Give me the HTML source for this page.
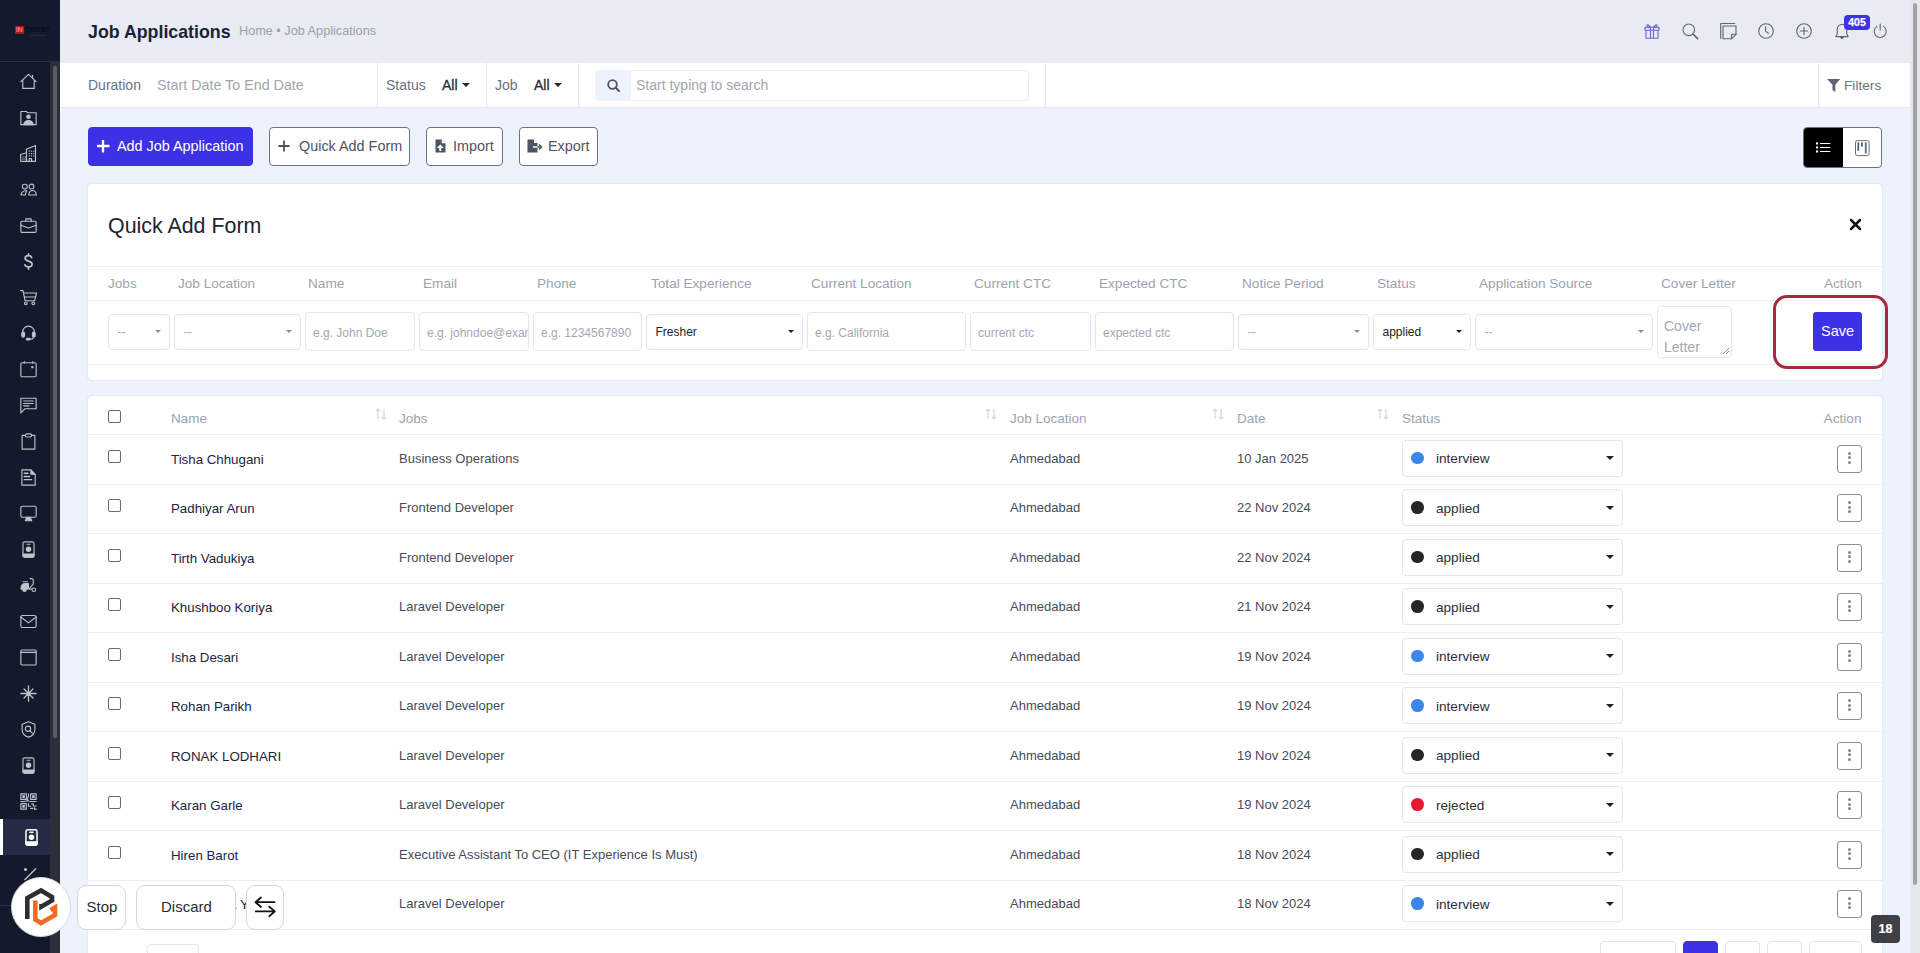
<!DOCTYPE html>
<html><head><meta charset="utf-8"><title>Job Applications</title>
<style>
*{box-sizing:border-box;margin:0;padding:0}
html,body{width:1920px;height:953px;overflow:hidden}
body{font-family:"Liberation Sans",sans-serif;background:#eef2fc;position:relative;color:#28313f}
.a{position:absolute;white-space:nowrap}
svg{position:absolute;overflow:visible}
.btn{position:absolute;top:127px;height:39px;border:1px solid #6b7280;border-radius:4px;background:#fff;font-size:14.4px;color:#4b5563}
.th{position:absolute;font-size:13.6px;color:#9ca3af;white-space:nowrap}
.inp{position:absolute;border:1px solid #e3e6eb;border-radius:4px;background:#fff;font-size:12px;color:#a3a8b2;white-space:nowrap;overflow:hidden}
.inp span{position:absolute;left:7px;top:11px}
.caret{position:absolute;width:0;height:0;border-left:4px solid transparent;border-right:4px solid transparent;border-top:4px solid #222}
.caretl{position:absolute;width:0;height:0;border-left:3.5px solid transparent;border-right:3.5px solid transparent;border-top:3.5px solid #888}
.hl{position:absolute;height:1px;background:#eceef2}
.cb{position:absolute;left:108px;width:13px;height:13px;border:1px solid #6a6a6a;border-radius:2px;background:#fff}
.nm{position:absolute;left:171px;font-size:13.3px;color:#20243f;white-space:nowrap;}
.td{position:absolute;font-size:13px;color:#464c5a;white-space:nowrap}
.st{position:absolute;left:1402px;width:221px;height:37px;border:1px solid #e3e5ea;border-radius:4px;background:#fff}
.dot{position:absolute;left:8px;top:11px;width:12.8px;height:12.8px;border-radius:50%}
.sttx{position:absolute;left:33px;top:10.5px;font-size:13.6px;color:#28313f}
.kb{position:absolute;left:1837px;width:25px;height:28px;border:1px solid #8d8d8d;border-radius:3px;background:#fff}
.kb i{position:absolute;left:10.2px;width:3px;height:3px;border-radius:50%;background:#858585}
.sort{position:absolute;width:12px;height:12px}
.ob{position:absolute;top:885px;height:45px;border:1px solid #d6d6d6;border-radius:9px;background:#fff;font-size:15px;color:#2b2b2b}
</style></head><body>
<div class="a" style="left:0;top:0;width:60px;height:953px;background:#131a2b"></div>
<div class="a" style="left:0;top:61px;width:60px;height:1px;background:#2a3040"></div>
<div class="a" style="left:50px;top:62px;width:10px;height:891px;background:#2a2f3a"></div>
<div class="a" style="left:53px;top:66px;width:4px;height:672px;background:#595d65;border-radius:2px"></div>
<div class="a" style="left:15px;top:26px;width:9px;height:7.6px;background:#b8141a;border-radius:1px"></div>
<div class="a" style="left:16px;top:26.3px;font-size:7px;font-weight:bold;color:#f08080;line-height:7px;letter-spacing:-0.3px">IN</div>
<div class="a" style="left:25.5px;top:26px;font-size:6.5px;font-weight:bold;color:#090c16;line-height:7px;letter-spacing:0.6px">CREST</div>
<div class="a" style="left:30px;top:34.5px;width:16px;height:1px;background:#262c3a"></div>
<div class="a" style="left:0;top:819px;width:50px;height:36px;background:#262b45"></div>
<div class="a" style="left:0;top:819px;width:3px;height:36px;background:#fff"></div>
<svg style="left:19.5px;top:72.5px" width="17" height="17" viewBox="0 0 16 16"><g fill="none" stroke="#bfc3ca" stroke-width="1.05" stroke-linejoin="round" stroke-linecap="round"><path d="M0.8 8.2L8 1.2l7.2 7M2.6 6.8V14.5h10.8V6.8M11.8 2.2v2.8"/></g></svg>
<svg style="left:19.5px;top:108.5px" width="17" height="17" viewBox="0 0 16 16"><g fill="none" stroke="#bfc3ca" stroke-width="1.05" stroke-linejoin="round" stroke-linecap="round"><path d="M0.8 2.3h5l1.2 1.2h8.2v11.2H0.8z"/><circle cx="8" cy="7.2" r="2.1" fill="#bfc3ca" stroke="none"/><path d="M3.5 14.7c.4-2.6 2.2-3.9 4.5-3.9s4.1 1.3 4.5 3.9z" fill="#bfc3ca"/></g></svg>
<svg style="left:19.5px;top:144.5px" width="17" height="17" viewBox="0 0 16 16"><g fill="none" stroke="#bfc3ca" stroke-width="1.05" stroke-linejoin="round" stroke-linecap="round"><path d="M0.6 15.4V8.9l5.5-1.6M6.1 15.4V4.1l8.5-3.6v14.9H0.6"/><path d="M8.6 15.4v-2.6h2.3v2.6"/><rect x="8.2" y="5.3" width="1.1" height="1.1" fill="#bfc3ca" stroke="none"/><rect x="8.2" y="7.5" width="1.1" height="1.1" fill="#bfc3ca" stroke="none"/><rect x="8.2" y="9.7" width="1.1" height="1.1" fill="#bfc3ca" stroke="none"/><rect x="10.3" y="5.3" width="1.1" height="1.1" fill="#bfc3ca" stroke="none"/><rect x="10.3" y="7.5" width="1.1" height="1.1" fill="#bfc3ca" stroke="none"/><rect x="10.3" y="9.7" width="1.1" height="1.1" fill="#bfc3ca" stroke="none"/><rect x="12.4" y="5.3" width="1.1" height="1.1" fill="#bfc3ca" stroke="none"/><rect x="12.4" y="7.5" width="1.1" height="1.1" fill="#bfc3ca" stroke="none"/><rect x="12.4" y="9.7" width="1.1" height="1.1" fill="#bfc3ca" stroke="none"/><rect x="2.2" y="10.8" width="1.1" height="1.1" fill="#bfc3ca" stroke="none"/><rect x="2.2" y="12.8" width="1.1" height="1.1" fill="#bfc3ca" stroke="none"/><rect x="4.2" y="10.8" width="1.1" height="1.1" fill="#bfc3ca" stroke="none"/><rect x="4.2" y="12.8" width="1.1" height="1.1" fill="#bfc3ca" stroke="none"/></g></svg>
<svg style="left:19.5px;top:180.5px" width="17" height="17" viewBox="0 0 16 16"><g fill="none" stroke="#bfc3ca" stroke-width="1.05" stroke-linejoin="round" stroke-linecap="round"><rect x="2.2" y="3" width="4.6" height="4.4" rx="1.8"/><circle cx="10.8" cy="5.2" r="2.3"/><path d="M0.9 13.2c.2-2.2 2.2-4.1 5.4-4.3l-1.5 4.3z"/><path d="M8.2 13.2c.3-2.6 1.8-4.2 3.6-4.2s3.3 1.6 3.6 4.2z"/></g></svg>
<svg style="left:19.5px;top:216.5px" width="17" height="17" viewBox="0 0 16 16"><g fill="none" stroke="#bfc3ca" stroke-width="1.05" stroke-linejoin="round" stroke-linecap="round"><rect x="0.8" y="4" width="14.4" height="10.5" rx="1"/><path d="M5.5 4V1.8h5V4M0.8 7.8l7.2 2.5 7.2-2.5"/></g></svg>
<svg style="left:19.5px;top:252.5px" width="17" height="17" viewBox="0 0 16 16"><g fill="none" stroke="#bfc3ca" stroke-width="1.05" stroke-linejoin="round" stroke-linecap="round"><path d="M11 4.3C10.4 3 9.3 2.5 8 2.5c-1.8 0-3.2 1-3.2 2.5s1.3 2.1 3.2 2.6 3.4 1 3.4 2.7-1.5 2.8-3.4 2.8c-1.6 0-2.9-.7-3.4-2M8 .8v1.7M8 13.1v2" stroke-width="1.6"/></g></svg>
<svg style="left:19.5px;top:288.5px" width="17" height="17" viewBox="0 0 16 16"><g fill="none" stroke="#bfc3ca" stroke-width="1.05" stroke-linejoin="round" stroke-linecap="round"><path d="M0.5 1.5h2.3l2 9.5h9l1.7-7.2H3.6M4.2 7.5h10.5"/><circle cx="5.5" cy="13.5" r="1.3"/><circle cx="12.5" cy="13.5" r="1.3"/></g></svg>
<svg style="left:19.5px;top:323.5px" width="17" height="17" viewBox="0 0 16 16"><g fill="none" stroke="#bfc3ca" stroke-width="1.05" stroke-linejoin="round" stroke-linecap="round"><path d="M2.5 9V7.5a5.5 5.5 0 0 1 11 0V9"/><rect x="1.7" y="7.7" width="2.6" height="4.6" rx="1.2" fill="#bfc3ca"/><rect x="11.7" y="7.7" width="2.6" height="4.6" rx="1.2" fill="#bfc3ca"/><path d="M12.8 12.5c-.3 1.3-1.6 1.8-3.3 1.8"/><rect x="6" y="13.5" width="3.5" height="1.6" rx=".8" fill="#bfc3ca"/></g></svg>
<svg style="left:19.5px;top:360.5px" width="17" height="17" viewBox="0 0 16 16"><g fill="none" stroke="#bfc3ca" stroke-width="1.05" stroke-linejoin="round" stroke-linecap="round"><rect x="0.8" y="1.6" width="14.4" height="13.2" rx="1.2"/><path d="M4 0.6v1.5M12 0.6v1.5"/><rect x="10.6" y="4.8" width="2" height="2" fill="#bfc3ca" stroke="none"/></g></svg>
<svg style="left:19.5px;top:396.5px" width="17" height="17" viewBox="0 0 16 16"><g fill="none" stroke="#bfc3ca" stroke-width="1.05" stroke-linejoin="round" stroke-linecap="round"><path d="M0.8 1.2h14.4v9.8H4.8L0.8 15z"/><path d="M3.5 3.8h9M3.5 6.1h9M3.5 8.4h5"/></g></svg>
<svg style="left:19.5px;top:432.5px" width="17" height="17" viewBox="0 0 16 16"><g fill="none" stroke="#bfc3ca" stroke-width="1.05" stroke-linejoin="round" stroke-linecap="round"><path d="M4.8 2.2H2v13h12v-13h-2.8"/><rect x="5" y="0.8" width="6" height="3" rx="1.4"/></g></svg>
<svg style="left:19.5px;top:468.5px" width="17" height="17" viewBox="0 0 16 16"><g fill="none" stroke="#bfc3ca" stroke-width="1.05" stroke-linejoin="round" stroke-linecap="round"><path d="M1.8 0.8h8.5l4 4.2v10.2H1.8z"/><path d="M10.3 1v4h4" fill="#bfc3ca"/><path d="M4 4h3.5M4 7h5M4 10h7" stroke-width="1.3"/></g></svg>
<svg style="left:19.5px;top:504.5px" width="17" height="17" viewBox="0 0 16 16"><g fill="none" stroke="#bfc3ca" stroke-width="1.05" stroke-linejoin="round" stroke-linecap="round"><rect x="0.8" y="1.2" width="14.4" height="10.3" rx="1.5"/><path d="M6.3 11.5l-1.3 3.3h6l-1.3-3.3z" fill="#bfc3ca"/></g></svg>
<svg style="left:19.5px;top:540.5px" width="17" height="17" viewBox="0 0 16 16"><g fill="none" stroke="#bfc3ca" stroke-width="1.05" stroke-linejoin="round" stroke-linecap="round"><rect x="2.8" y="0.8" width="10.4" height="14.4" rx="1.6"/><path d="M6.5 3h3"/><circle cx="8" cy="7.8" r="2.6" fill="#bfc3ca" stroke="none"/><path d="M2.8 12.2h10.4v1.5a1.5 1.5 0 0 1-1.5 1.5H4.3a1.5 1.5 0 0 1-1.5-1.5z" fill="#bfc3ca"/></g></svg>
<svg style="left:19.5px;top:576.5px" width="17" height="17" viewBox="0 0 16 16"><g fill="none" stroke="#bfc3ca" stroke-width="1.05" stroke-linejoin="round" stroke-linecap="round"><path d="M1 10.5c0-2.8 1.6-4.4 4.2-4.4h2.8v4.2c0 .8-.5 1.2-1.2 1.2H1z" fill="#bfc3ca"/><circle cx="4.2" cy="12" r="1.6" fill="#bfc3ca"/><circle cx="13" cy="12" r="1.7"/><path d="M3 4.5h4M9.5 1.5h1.5c.8 0 1.5.8 1.5 1.8v3.2l-4 5h2.5"/></g></svg>
<svg style="left:19.5px;top:612.5px" width="17" height="17" viewBox="0 0 16 16"><g fill="none" stroke="#bfc3ca" stroke-width="1.05" stroke-linejoin="round" stroke-linecap="round"><rect x="0.8" y="2.3" width="14.4" height="11.4" rx="1.5"/><path d="M0.8 3.8l7.2 5.5 7.2-5.5"/></g></svg>
<svg style="left:19.5px;top:648.5px" width="17" height="17" viewBox="0 0 16 16"><g fill="none" stroke="#bfc3ca" stroke-width="1.05" stroke-linejoin="round" stroke-linecap="round"><rect x="0.8" y="1" width="14.4" height="14" rx="1"/><path d="M0.8 3.2h14.4"/></g></svg>
<svg style="left:19.5px;top:684.5px" width="17" height="17" viewBox="0 0 16 16"><g fill="none" stroke="#bfc3ca" stroke-width="1.05" stroke-linejoin="round" stroke-linecap="round"><path d="M8 .8v14.4M.8 8h14.4M3.8 3.8l8.4 8.4M12.2 3.8l-8.4 8.4" stroke-width="1.2"/></g></svg>
<svg style="left:19.5px;top:720.5px" width="17" height="17" viewBox="0 0 16 16"><g fill="none" stroke="#bfc3ca" stroke-width="1.05" stroke-linejoin="round" stroke-linecap="round"><path d="M8 0.8l6 2.2v5c0 3.4-2.6 6.2-6 7.2-3.4-1-6-3.8-6-7.2V3z"/><circle cx="7.5" cy="7.3" r="2.5"/><path d="M9.4 9.2l2.3 2.3"/></g></svg>
<svg style="left:19.5px;top:756.5px" width="17" height="17" viewBox="0 0 16 16"><g fill="none" stroke="#bfc3ca" stroke-width="1.05" stroke-linejoin="round" stroke-linecap="round"><rect x="2.8" y="0.8" width="10.4" height="14.4" rx="1.6"/><path d="M6.5 3h3"/><circle cx="8" cy="7.8" r="2.6" fill="#bfc3ca" stroke="none"/><path d="M2.8 12.2h10.4v1.5a1.5 1.5 0 0 1-1.5 1.5H4.3a1.5 1.5 0 0 1-1.5-1.5z" fill="#bfc3ca"/></g></svg>
<svg style="left:19.5px;top:792.5px" width="17" height="17" viewBox="0 0 16 16"><g fill="none" stroke="#bfc3ca" stroke-width="1.05" stroke-linejoin="round" stroke-linecap="round"><rect x="0.8" y="0.8" width="5.2" height="5.2"/><rect x="10" y="0.8" width="5.2" height="5.2"/><rect x="0.8" y="10" width="5.2" height="5.2"/><rect x="2.7" y="2.7" width="1.4" height="1.4" fill="#bfc3ca"/><rect x="11.9" y="2.7" width="1.4" height="1.4" fill="#bfc3ca"/><rect x="2.7" y="11.9" width="1.4" height="1.4" fill="#bfc3ca"/><path d="M8 .8v2.5l-.8 1.2v3M0.8 8h3.5l1.5-.5h2.7M9.5 8h5.7M8 10v2.5h2M11 10.2h1.5v2h2.7M10 14.5h2M13.5 13.8v1.4h1.7"/></g></svg>
<svg style="left:23px;top:828.5px" width="17" height="17" viewBox="0 0 16 16"><g fill="none" stroke="#fff" stroke-width="1.4" stroke-linejoin="round" stroke-linecap="round"><rect x="2.8" y="0.8" width="10.4" height="14.4" rx="1.6"/><path d="M6.5 3h3"/><circle cx="8" cy="7.8" r="2.6" fill="#fff" stroke="none"/><path d="M2.8 12.2h10.4v1.5a1.5 1.5 0 0 1-1.5 1.5H4.3a1.5 1.5 0 0 1-1.5-1.5z" fill="#fff"/></g></svg>
<div class="a" style="left:23.5px;top:868px;width:3px;height:3px;border-radius:50%;background:#c3c6cc"></div>
<svg style="left:24px;top:868px" width="14" height="14"><path d="M0.5 12L12 0.5" stroke="#c3c6cc" stroke-width="1.2"/></svg>
<div class="a" style="left:0;top:905px;width:50px;height:1px;background:#2f3546"></div>
<div class="a" style="left:60px;top:0;width:1850px;height:63px;background:#e8ebf2"></div>
<div class="a" style="left:88px;top:21.5px;font-size:17.8px;font-weight:bold;color:#1c2236">Job Applications</div>
<div class="a" style="left:239px;top:24px;font-size:12.7px;color:#9aa0ab">Home • Job Applications</div>
<svg style="left:1644px;top:23px" width="16" height="16" viewBox="0 0 16 16"><g fill="none" stroke="#6b5fd8" stroke-width="1.1" stroke-linecap="round" stroke-linejoin="round"><path d="M1 4.3h14v3H1z"/><path d="M2 7.3v8h12v-8M6.5 4.3v11M9.5 4.3v11"/><path d="M6.5 4.3C5.5 2.3 3.5 1.3 3 2.3s1.3 2 3.5 2M9.5 4.3c1-2 3-3 3.5-2s-1.3 2-3.5 2"/></g></svg>
<svg style="left:1682px;top:23px" width="16" height="16" viewBox="0 0 16 16"><g fill="none" stroke="#5f6470" stroke-width="1.1" stroke-linecap="round" stroke-linejoin="round"><circle cx="6.8" cy="6.8" r="5.8"/><path d="M11 11l4.6 4.6" stroke-width="1.6"/></g></svg>
<svg style="left:1720px;top:23px" width="16" height="16" viewBox="0 0 16 16"><g fill="none" stroke="#5f6470" stroke-width="1.1" stroke-linecap="round" stroke-linejoin="round"><path d="M0.7 15.3V0.5h14"/><path d="M3 15.8V3h13v8.3l-4.5 4.5z"/><path d="M11.5 15.8v-4.5h4.5"/></g></svg>
<svg style="left:1758px;top:23px" width="16" height="16" viewBox="0 0 16 16"><g fill="none" stroke="#5f6470" stroke-width="1.1" stroke-linecap="round" stroke-linejoin="round"><circle cx="8" cy="8" r="7.3"/><path d="M7.6 3.8v4.6l3 1.8"/></g></svg>
<svg style="left:1796px;top:23px" width="16" height="16" viewBox="0 0 16 16"><g fill="none" stroke="#5f6470" stroke-width="1.1" stroke-linecap="round" stroke-linejoin="round"><circle cx="8" cy="8" r="7.3"/><path d="M8 4.3v7.4M4.3 8h7.4"/></g></svg>
<svg style="left:1835px;top:23px" width="16" height="16" viewBox="0 0 16 16"><g fill="none" stroke="#5f6470" stroke-width="1.1" stroke-linecap="round" stroke-linejoin="round"><path d="M7 1.2c-3 .4-4.8 2.8-4.8 5.6v4.3L.9 13.6h12.2l-1.3-2.5V6.8C11.8 4 10 1.6 7 1.2z"/><path d="M5.6 14.3h2.8L7 15.6z" fill="#5f6470"/></g></svg>
<div class="a" style="left:1844px;top:15px;width:26px;height:15px;border-radius:4px;background:#3d31e5;color:#fff;font-size:10.5px;font-weight:bold;text-align:center;line-height:15px;-webkit-text-stroke:0.25px #fff">405</div>
<svg style="left:1874px;top:23px" width="16" height="16" viewBox="0 0 16 16"><g fill="none" stroke="#5f6470" stroke-width="1.1" stroke-linecap="round" stroke-linejoin="round"><path d="M6.2 1v6"/><path d="M3 3.4A6 6 0 1 0 9.4 3.4"/></g></svg>
<div class="a" style="left:60px;top:63px;width:1850px;height:45px;background:#fff;border-bottom:1px solid #e4e7ee"></div>
<div class="a" style="left:377px;top:63px;width:1px;height:44px;background:#e6e9f0"></div>
<div class="a" style="left:486px;top:63px;width:1px;height:44px;background:#e6e9f0"></div>
<div class="a" style="left:578px;top:63px;width:1px;height:44px;background:#e6e9f0"></div>
<div class="a" style="left:1045px;top:63px;width:1px;height:44px;background:#e6e9f0"></div>
<div class="a" style="left:1818px;top:63px;width:1px;height:44px;background:#e6e9f0"></div>
<div class="a" style="left:88px;top:76.5px;font-size:14px;color:#6b7280">Duration</div>
<div class="a" style="left:157px;top:77px;font-size:14.3px;color:#a1a5ae">Start Date To End Date</div>
<div class="a" style="left:386px;top:76.5px;font-size:14px;color:#6b7280">Status</div>
<div class="a" style="left:442px;top:76.5px;font-size:14px;color:#1f2937;-webkit-text-stroke:0.3px #1f2937">All</div>
<div class="caret" style="left:462px;top:83px;border-top-color:#1f2937"></div>
<div class="a" style="left:495px;top:76.5px;font-size:14px;color:#6b7280">Job</div>
<div class="a" style="left:534px;top:76.5px;font-size:14px;color:#1f2937;-webkit-text-stroke:0.3px #1f2937">All</div>
<div class="caret" style="left:554px;top:83px;border-top-color:#1f2937"></div>
<div class="a" style="left:595px;top:70px;width:434px;height:31px;border:1px solid #eceef2;border-radius:4px;background:#fff"></div>
<div class="a" style="left:595px;top:70px;width:36px;height:31px;background:#eef2fc;border-radius:4px 0 0 4px"></div>
<svg style="left:607px;top:79px" width="13" height="13" viewBox="0 0 13 13"><circle cx="5.5" cy="5.5" r="4.3" fill="none" stroke="#4b5563" stroke-width="1.8"/><path d="M8.8 8.8l3.2 3.2" stroke="#4b5563" stroke-width="2" stroke-linecap="round"/></svg>
<div class="a" style="left:636px;top:77px;font-size:14px;color:#a1a5ae">Start typing to search</div>
<svg style="left:1827px;top:78.8px" width="13.2" height="13.2" viewBox="0 0 13 13"><path d="M0 0h13l-4.8 5.6v7.3l-2.8-2V5.6z" fill="#5f6672"/></svg>
<div class="a" style="left:1844px;top:77.5px;font-size:13.7px;color:#6b7280">Filters</div>
<div class="btn" style="left:88px;width:165px;background:#3d31e5;border-color:#3d31e5;color:#fff"><span class="a" style="left:28px;top:10px">Add Job Application</span></div>
<svg style="left:97px;top:140px" width="12" height="12"><path d="M6 0v12.5M0 6h12.5" stroke="#fff" stroke-width="2.4"/></svg>
<div class="btn" style="left:269px;width:141px"><span class="a" style="left:29px;top:10px">Quick Add Form</span></div>
<svg style="left:278px;top:140px" width="12" height="12"><path d="M6 0.5v11M0.5 6h11" stroke="#4b5563" stroke-width="1.8"/></svg>
<div class="btn" style="left:426px;width:77px"><span class="a" style="left:26px;top:10px">Import</span></div>
<svg style="left:435px;top:139px" width="11" height="14" viewBox="0 0 11 14"><path d="M0.5 0.5h6.5l3.5 3.5v9.5h-10z" fill="#4b5563"/><path d="M7 0.5v3.5h3.5" fill="#eee" stroke="#fff" stroke-width=".6"/><path d="M5.3 5.5L1.8 9h2.5v3h2v-3h2.5z" fill="#fff"/></svg>
<div class="btn" style="left:519px;width:79px"><span class="a" style="left:28px;top:10px">Export</span></div>
<svg style="left:527px;top:139px" width="16" height="14" viewBox="0 0 16 14"><path d="M0.5 0.5h6.5l3.5 3.5v9.5h-10z" fill="#4b5563"/><path d="M7 0.5v3.5h3.5" fill="#fff"/><path d="M6 8h8.5M12 5.5l2.5 2.5-2.5 2.5" stroke="#4b5563" stroke-width="1.5" fill="none"/><path d="M6 8h4.5" stroke="#fff" stroke-width="1.5"/></svg>
<div class="a" style="left:1803px;top:127px;width:79px;height:41px;border:1px solid #6b7280;border-radius:4px;background:#fff;overflow:hidden"><div class="a" style="left:-1px;top:-1px;width:40px;height:43px;background:#000"></div></div>
<svg style="left:1803px;top:127px" width="79" height="41" viewBox="1803 127 79 41"><g fill="#fff"><rect x="1816" y="142.4" width="2.1" height="2.1"/><rect x="1816" y="146.4" width="2.1" height="2.1"/><rect x="1816" y="150.4" width="2.1" height="2.1"/><rect x="1820" y="143" width="10.3" height="1"/><rect x="1820" y="147" width="10.3" height="1"/><rect x="1820" y="151" width="10.3" height="1"/></g><rect x="1855.5" y="140.6" width="13.6" height="15" rx="1.8" fill="none" stroke="#6b6f75" stroke-width="1"/><rect x="1857.4" y="142.3" width="1.8" height="8.4" fill="#4f6476"/><rect x="1861" y="142.3" width="1.8" height="4.3" fill="#4f6476"/><rect x="1864.8" y="142.3" width="2" height="11.2" fill="#5f7d92"/></svg>
<div class="a" style="left:88px;top:184px;width:1794px;height:196px;background:#fff;border-radius:4px;box-shadow:0 0 1.5px rgba(40,50,90,.22)"></div>
<div class="a" style="left:108px;top:214px;font-size:21.4px;color:#1f2433">Quick Add Form</div>
<svg style="left:1850px;top:219px" width="11" height="11"><path d="M1 1l9 9M10 1l-9 9" stroke="#111" stroke-width="2.5" stroke-linecap="round"/></svg>
<div class="hl" style="left:88px;top:266px;width:1794px"></div>
<div class="hl" style="left:88px;top:300px;width:1794px"></div>
<div class="hl" style="left:88px;top:364px;width:1794px"></div>
<div class="th" style="left:108px;top:276px">Jobs</div>
<div class="th" style="left:178px;top:276px">Job Location</div>
<div class="th" style="left:308px;top:276px">Name</div>
<div class="th" style="left:423px;top:276px">Email</div>
<div class="th" style="left:537px;top:276px">Phone</div>
<div class="th" style="left:651px;top:276px">Total Experience</div>
<div class="th" style="left:811px;top:276px">Current Location</div>
<div class="th" style="left:974px;top:276px">Current CTC</div>
<div class="th" style="left:1099px;top:276px">Expected CTC</div>
<div class="th" style="left:1242px;top:276px">Notice Period</div>
<div class="th" style="left:1377px;top:276px">Status</div>
<div class="th" style="left:1479px;top:276px">Application Source</div>
<div class="th" style="left:1661px;top:276px">Cover Letter</div>
<div class="th" style="left:1824px;top:276px">Action</div>
<div class="inp" style="left:108px;top:314px;width:62px;height:36px;color:#a3a8b2"><span style="left:8.5px;top:10px">--</span></div><div class="caret" style="left:155px;top:329.7px;border-left-width:3.5px;border-right-width:3.5px;border-top-width:3.5px;border-top-color:#8a8f98"></div>
<div class="inp" style="left:174px;top:314px;width:127px;height:36px;color:#a3a8b2"><span style="left:8.5px;top:10px">--</span></div><div class="caret" style="left:286px;top:329.7px;border-left-width:3.5px;border-right-width:3.5px;border-top-width:3.5px;border-top-color:#8a8f98"></div>
<div class="inp" style="left:305px;top:312px;width:110px;height:39px"><span style="left:7px;top:13px">e.g. John Doe</span></div>
<div class="inp" style="left:419px;top:312px;width:110px;height:39px"><span style="left:7px;top:13px">e.g. johndoe@example.com</span></div>
<div class="inp" style="left:533px;top:312px;width:109px;height:39px"><span style="left:7px;top:13px">e.g. 1234567890</span></div>
<div class="inp" style="left:646px;top:314px;width:157px;height:36px;color:#222"><span style="left:8.5px;top:10px">Fresher</span></div><div class="caret" style="left:788px;top:329.7px;border-left-width:3.5px;border-right-width:3.5px;border-top-width:3.5px;border-top-color:#222"></div>
<div class="inp" style="left:807px;top:312px;width:159px;height:39px"><span style="left:7px;top:13px">e.g. California</span></div>
<div class="inp" style="left:970px;top:312px;width:121px;height:39px"><span style="left:7px;top:13px">current ctc</span></div>
<div class="inp" style="left:1095px;top:312px;width:139px;height:39px"><span style="left:7px;top:13px">expected ctc</span></div>
<div class="inp" style="left:1238px;top:314px;width:131px;height:36px;color:#a3a8b2"><span style="left:8.5px;top:10px">--</span></div><div class="caret" style="left:1354px;top:329.7px;border-left-width:3.5px;border-right-width:3.5px;border-top-width:3.5px;border-top-color:#8a8f98"></div>
<div class="inp" style="left:1373px;top:314px;width:98px;height:36px;color:#222"><span style="left:8.5px;top:10px">applied</span></div><div class="caret" style="left:1456px;top:329.7px;border-left-width:3.5px;border-right-width:3.5px;border-top-width:3.5px;border-top-color:#222"></div>
<div class="inp" style="left:1475px;top:314px;width:178px;height:36px;color:#a3a8b2"><span style="left:8.5px;top:10px">--</span></div><div class="caret" style="left:1638px;top:329.7px;border-left-width:3.5px;border-right-width:3.5px;border-top-width:3.5px;border-top-color:#8a8f98"></div>
<div class="inp" style="left:1657px;top:306px;width:75px;height:52px;font-size:14px;color:#a3a8b2;white-space:normal;line-height:21px"><span style="left:6px;top:8.5px">Cover<br>Letter</span></div>
<svg style="left:1721px;top:346px" width="9" height="9"><path d="M8 2L2 8M8 5L5 8" stroke="#888" stroke-width="1"/></svg>
<div class="a" style="left:1813px;top:312px;width:49px;height:39px;background:#3d31e5;border-radius:3px;color:#fff;font-size:14.5px;text-align:center;line-height:39px">Save</div>
<div class="a" style="left:1772.8px;top:294.5px;width:115px;height:74px;border:3px solid #a52a3f;border-radius:14px"></div>
<div class="a" style="left:88px;top:396px;width:1794px;height:600px;background:#fff;border-radius:4px;box-shadow:0 0 1.5px rgba(40,50,90,.22)"></div>
<div class="cb" style="top:410px"></div>
<div class="th" style="left:171px;top:411px;font-size:13.5px">Name</div>
<svg style="left:375px;top:408px" width="12" height="12" viewBox="0 0 12 12"><path d="M3 11V1M1 3l2-2 2 2M9 1v10M7 9l2 2 2-2" fill="none" stroke="#d5d8dd" stroke-width="1.2"/></svg>
<div class="th" style="left:399px;top:411px;font-size:13.5px">Jobs</div>
<svg style="left:985px;top:408px" width="12" height="12" viewBox="0 0 12 12"><path d="M3 11V1M1 3l2-2 2 2M9 1v10M7 9l2 2 2-2" fill="none" stroke="#d5d8dd" stroke-width="1.2"/></svg>
<div class="th" style="left:1010px;top:411px;font-size:13.5px">Job Location</div>
<svg style="left:1212px;top:408px" width="12" height="12" viewBox="0 0 12 12"><path d="M3 11V1M1 3l2-2 2 2M9 1v10M7 9l2 2 2-2" fill="none" stroke="#d5d8dd" stroke-width="1.2"/></svg>
<div class="th" style="left:1237px;top:411px;font-size:13.5px">Date</div>
<svg style="left:1377px;top:408px" width="12" height="12" viewBox="0 0 12 12"><path d="M3 11V1M1 3l2-2 2 2M9 1v10M7 9l2 2 2-2" fill="none" stroke="#d5d8dd" stroke-width="1.2"/></svg>
<div class="th" style="left:1402px;top:411px;font-size:13.5px">Status</div>
<div class="th" style="left:1823.5px;top:411px;font-size:13.7px">Action</div>
<div class="hl" style="left:88px;top:434px;width:1794px"></div>
<div class="cb" style="top:449.6px"></div>
<div class="nm" style="top:451.6px">Tisha Chhugani</div>
<div class="td" style="left:399px;top:450.8px">Business Operations</div>
<div class="td" style="left:1010px;top:450.6px">Ahmedabad</div>
<div class="td" style="left:1237px;top:450.6px">10 Jan 2025</div>
<div class="st" style="top:439.6px"><div class="dot" style="background:#3b87e8"></div><div class="sttx">interview</div><div class="caret" style="left:203px;top:15.5px"></div></div>
<div class="kb" style="top:444.6px"><i style="top:6.2px"></i><i style="top:10.9px"></i><i style="top:15.4px"></i></div>
<div class="hl" style="left:88px;top:483.9px;width:1794px"></div>
<div class="cb" style="top:499.1px"></div>
<div class="nm" style="top:501.1px">Padhiyar Arun</div>
<div class="td" style="left:399px;top:500.3px">Frontend Developer</div>
<div class="td" style="left:1010px;top:500.1px">Ahmedabad</div>
<div class="td" style="left:1237px;top:500.1px">22 Nov 2024</div>
<div class="st" style="top:489.1px"><div class="dot" style="background:#252628"></div><div class="sttx">applied</div><div class="caret" style="left:203px;top:15.5px"></div></div>
<div class="kb" style="top:494.1px"><i style="top:6.2px"></i><i style="top:10.9px"></i><i style="top:15.4px"></i></div>
<div class="hl" style="left:88px;top:533.4px;width:1794px"></div>
<div class="cb" style="top:548.6px"></div>
<div class="nm" style="top:550.6px">Tirth Vadukiya</div>
<div class="td" style="left:399px;top:549.9px">Frontend Developer</div>
<div class="td" style="left:1010px;top:549.6px">Ahmedabad</div>
<div class="td" style="left:1237px;top:549.6px">22 Nov 2024</div>
<div class="st" style="top:538.6px"><div class="dot" style="background:#252628"></div><div class="sttx">applied</div><div class="caret" style="left:203px;top:15.5px"></div></div>
<div class="kb" style="top:543.6px"><i style="top:6.2px"></i><i style="top:10.9px"></i><i style="top:15.4px"></i></div>
<div class="hl" style="left:88px;top:582.9px;width:1794px"></div>
<div class="cb" style="top:598.1px"></div>
<div class="nm" style="top:600.1px">Khushboo Koriya</div>
<div class="td" style="left:399px;top:599.4px">Laravel Developer</div>
<div class="td" style="left:1010px;top:599.1px">Ahmedabad</div>
<div class="td" style="left:1237px;top:599.1px">21 Nov 2024</div>
<div class="st" style="top:588.1px"><div class="dot" style="background:#252628"></div><div class="sttx">applied</div><div class="caret" style="left:203px;top:15.5px"></div></div>
<div class="kb" style="top:593.1px"><i style="top:6.2px"></i><i style="top:10.9px"></i><i style="top:15.4px"></i></div>
<div class="hl" style="left:88px;top:632.4px;width:1794px"></div>
<div class="cb" style="top:647.6px"></div>
<div class="nm" style="top:649.6px">Isha Desari</div>
<div class="td" style="left:399px;top:648.9px">Laravel Developer</div>
<div class="td" style="left:1010px;top:648.6px">Ahmedabad</div>
<div class="td" style="left:1237px;top:648.6px">19 Nov 2024</div>
<div class="st" style="top:637.6px"><div class="dot" style="background:#3b87e8"></div><div class="sttx">interview</div><div class="caret" style="left:203px;top:15.5px"></div></div>
<div class="kb" style="top:642.6px"><i style="top:6.2px"></i><i style="top:10.9px"></i><i style="top:15.4px"></i></div>
<div class="hl" style="left:88px;top:681.9px;width:1794px"></div>
<div class="cb" style="top:697.1px"></div>
<div class="nm" style="top:699.1px">Rohan Parikh</div>
<div class="td" style="left:399px;top:698.4px">Laravel Developer</div>
<div class="td" style="left:1010px;top:698.1px">Ahmedabad</div>
<div class="td" style="left:1237px;top:698.1px">19 Nov 2024</div>
<div class="st" style="top:687.1px"><div class="dot" style="background:#3b87e8"></div><div class="sttx">interview</div><div class="caret" style="left:203px;top:15.5px"></div></div>
<div class="kb" style="top:692.1px"><i style="top:6.2px"></i><i style="top:10.9px"></i><i style="top:15.4px"></i></div>
<div class="hl" style="left:88px;top:731.4px;width:1794px"></div>
<div class="cb" style="top:746.6px"></div>
<div class="nm" style="top:748.6px">RONAK LODHARI</div>
<div class="td" style="left:399px;top:747.9px">Laravel Developer</div>
<div class="td" style="left:1010px;top:747.6px">Ahmedabad</div>
<div class="td" style="left:1237px;top:747.6px">19 Nov 2024</div>
<div class="st" style="top:736.6px"><div class="dot" style="background:#252628"></div><div class="sttx">applied</div><div class="caret" style="left:203px;top:15.5px"></div></div>
<div class="kb" style="top:741.6px"><i style="top:6.2px"></i><i style="top:10.9px"></i><i style="top:15.4px"></i></div>
<div class="hl" style="left:88px;top:780.9px;width:1794px"></div>
<div class="cb" style="top:796.1px"></div>
<div class="nm" style="top:798.1px">Karan Garle</div>
<div class="td" style="left:399px;top:797.4px">Laravel Developer</div>
<div class="td" style="left:1010px;top:797.1px">Ahmedabad</div>
<div class="td" style="left:1237px;top:797.1px">19 Nov 2024</div>
<div class="st" style="top:786.1px"><div class="dot" style="background:#e8192c"></div><div class="sttx">rejected</div><div class="caret" style="left:203px;top:15.5px"></div></div>
<div class="kb" style="top:791.1px"><i style="top:6.2px"></i><i style="top:10.9px"></i><i style="top:15.4px"></i></div>
<div class="hl" style="left:88px;top:830.4px;width:1794px"></div>
<div class="cb" style="top:845.6px"></div>
<div class="nm" style="top:847.6px">Hiren Barot</div>
<div class="td" style="left:399px;top:846.9px">Executive Assistant To CEO (IT Experience Is Must)</div>
<div class="td" style="left:1010px;top:846.6px">Ahmedabad</div>
<div class="td" style="left:1237px;top:846.6px">18 Nov 2024</div>
<div class="st" style="top:835.6px"><div class="dot" style="background:#252628"></div><div class="sttx">applied</div><div class="caret" style="left:203px;top:15.5px"></div></div>
<div class="kb" style="top:840.6px"><i style="top:6.2px"></i><i style="top:10.9px"></i><i style="top:15.4px"></i></div>
<div class="hl" style="left:88px;top:879.9px;width:1794px"></div>
<div class="cb" style="top:895.1px"></div>
<div class="nm" style="top:897.1px"></div>
<div class="td" style="left:399px;top:896.4px">Laravel Developer</div>
<div class="td" style="left:1010px;top:896.1px">Ahmedabad</div>
<div class="td" style="left:1237px;top:896.1px">18 Nov 2024</div>
<div class="st" style="top:885.1px"><div class="dot" style="background:#3b87e8"></div><div class="sttx">interview</div><div class="caret" style="left:203px;top:15.5px"></div></div>
<div class="kb" style="top:890.1px"><i style="top:6.2px"></i><i style="top:10.9px"></i><i style="top:15.4px"></i></div>
<div class="hl" style="left:88px;top:929.4px;width:1794px"></div>
<div class="nm" style="left:228px;top:897.2px">K</div><div class="nm" style="left:240px;top:897.2px">Y</div>
<div class="a" style="left:147px;top:944px;width:52px;height:30px;border:1px solid #e3e5ea;border-radius:4px;background:#fff"></div>
<div class="a" style="left:1600px;top:941px;width:76px;height:36px;border:1px solid #e3e5ea;border-radius:4px;background:#fff"></div>
<div class="a" style="left:1683px;top:941px;width:35px;height:36px;border:1px solid #3d31e5;border-radius:4px;background:#3d31e5"></div>
<div class="a" style="left:1725px;top:941px;width:35px;height:36px;border:1px solid #e3e5ea;border-radius:4px;background:#fff"></div>
<div class="a" style="left:1767px;top:941px;width:35px;height:36px;border:1px solid #e3e5ea;border-radius:4px;background:#fff"></div>
<div class="a" style="left:1809px;top:941px;width:53px;height:36px;border:1px solid #e3e5ea;border-radius:4px;background:#fff"></div>
<div class="a" style="left:1871px;top:915px;width:29px;height:28px;border-radius:4px;background:#3f4046;color:#fff;font-size:12.5px;font-weight:bold;text-align:center;line-height:28px;-webkit-text-stroke:0.2px #fff">18</div>
<div class="a" style="left:1910px;top:0;width:10px;height:953px;background:#e5e8ed"></div>
<div class="a" style="left:1913px;top:3px;width:4px;height:882px;background:#a3a3a3;border-radius:2px"></div>
<div class="a" style="left:11px;top:877px;width:60px;height:60px;border-radius:50%;background:#fff;border:1px solid #d9d9d9"></div>
<svg style="left:15px;top:880px" width="50" height="50" viewBox="0 0 50 50"><polyline points="12.3,39 12.3,18 26,10.5 37,17 37,20.5 26.5,26.5 26.5,24" fill="none" stroke="#2e2e2e" stroke-width="4.6" stroke-linejoin="miter"/><polyline points="20.3,20.5 20.3,39.5 26,43 40,35 40,27.5 35.5,30" fill="none" stroke="#f26b21" stroke-width="4.6" stroke-linejoin="miter"/></svg>
<div class="ob" style="left:77px;width:49px"><span class="a" style="left:8.5px;top:12px">Stop</span></div>
<div class="ob" style="left:136px;width:100px"><span class="a" style="left:24px;top:12px">Discard</span></div>
<div class="ob" style="left:246px;width:38px"></div>
<svg style="left:255px;top:897px" width="21" height="20" viewBox="0 0 21 20"><path d="M0.5 5.2h19M0.5 5.2l5.5-4.7M0.5 5.2l5.5 4.8M19.8 14.4h-19M19.8 14.4l-5.5-4.7M19.8 14.4l-5.5 4.8" stroke="#111" stroke-width="1.8" fill="none" stroke-linecap="round" stroke-linejoin="round"/></svg>
</body></html>
